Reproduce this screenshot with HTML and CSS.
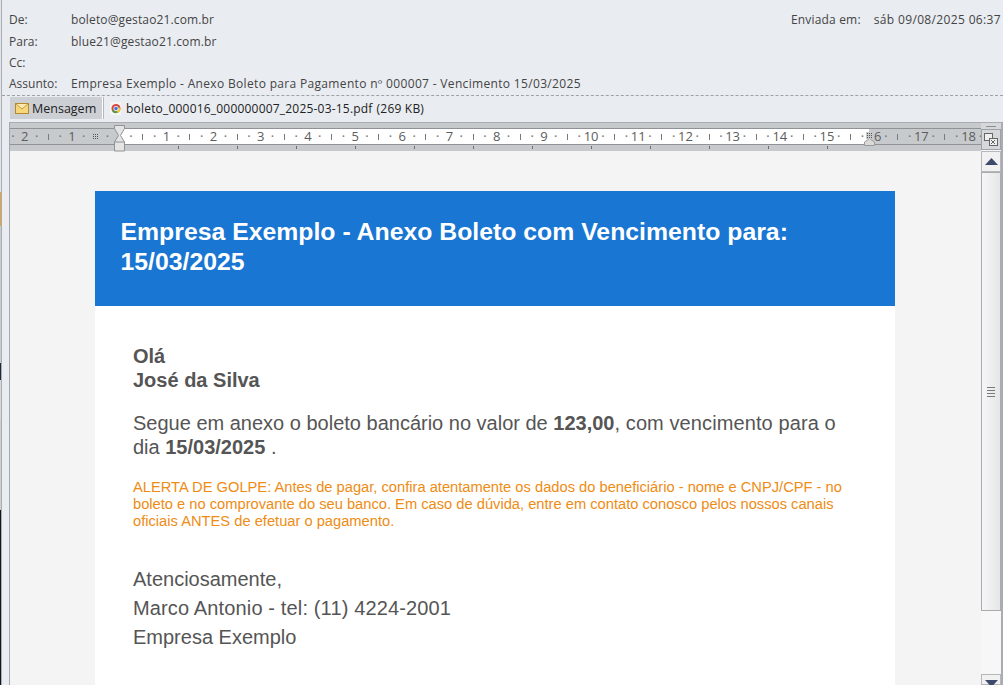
FILE: index.html
```html
<!DOCTYPE html>
<html lang="pt-BR">
<head>
<meta charset="utf-8">
<title>Boleto</title>
<link rel="stylesheet" href="styles.css">
</head>
<body>
<div class="window">
  <div class="sliver">
    <i class="seg seg-a"></i><i class="seg seg-b"></i><i class="seg seg-c"></i><i class="seg seg-d"></i><i class="seg seg-e"></i><i class="seg seg-f"></i><i class="seg seg-g"></i>
  </div>
  <div class="main">
    <header class="meta">
      <div class="row"><span class="label">De:</span><span class="value addr">boleto@gestao21.com.br</span><span class="sent"><span class="sent-label">Enviada em:</span><span class="sent-date">sáb 09/08/2025 06:37</span></span></div>
      <div class="row"><span class="label">Para:</span><span class="value addr">blue21@gestao21.com.br</span></div>
      <div class="row"><span class="label">Cc:</span><span class="value"></span></div>
      <div class="row"><span class="label">Assunto:</span><span class="value subject">Empresa Exemplo - Anexo Boleto para Pagamento nº 000007 - Vencimento 15/03/2025</span></div>
    </header>
    <nav class="tabs">
      <div class="tab active">
        <svg class="ic-mail" width="14" height="11" viewBox="0 0 14 11"><rect x=".5" y=".5" width="13" height="10" fill="#f6d77c" stroke="#b8892c"/><path d="M1 1l6 5 6-5" fill="#fbe9ad" stroke="#c79a3c"/></svg>
        <span>Mensagem</span>
      </div>
      <div class="tab">
        <svg class="ic-pdf" width="12" height="13" viewBox="0 0 12 13"><rect x="0" y="0" width="11" height="13" fill="#f5f5f2"/><circle cx="6" cy="6.500" r="4.500" fill="#d9463a"/><path d="M6 6.500L2 9a4.500 4.500 0 0 0 5.500 1.800z" fill="#4a9f4c"/><path d="M6 6.500l4.400-1a4.500 4.500 0 0 1-2.900 5.300z" fill="#f2c531"/><circle cx="6" cy="6.500" r="2.200" fill="#3f78d8" stroke="#fff" stroke-width=".8"/></svg>
        <span class="file">boleto_000016_000000007_2025-03-15.pdf</span><span class="size">(269 KB)</span>
      </div>
    </nav>
    <section class="editor">
      <div class="editor-left">
        <div class="ruler">
          <div class="ruler-top"></div>
          <div class="ruler-scale">
            <div class="ruler-track">
              <span class="cell"><b class="blank"></b><i>·</i><em>2</em><i>·</i></span>
              <span class="cell"><b></b><i>·</i><em>1</em><i>·</i></span>
              <span class="cell"><b class="blank"><u class="grid-mark"></u></b><i>·</i><em></em><i>·</i></span>
              <span class="cell"><b></b><i>·</i><em>1</em><i>·</i></span>
              <span class="cell"><b></b><i>·</i><em>2</em><i>·</i></span>
              <span class="cell"><b></b><i>·</i><em>3</em><i>·</i></span>
              <span class="cell"><b></b><i>·</i><em>4</em><i>·</i></span>
              <span class="cell"><b></b><i>·</i><em>5</em><i>·</i></span>
              <span class="cell"><b></b><i>·</i><em>6</em><i>·</i></span>
              <span class="cell"><b></b><i>·</i><em>7</em><i>·</i></span>
              <span class="cell"><b></b><i>·</i><em>8</em><i>·</i></span>
              <span class="cell"><b></b><i>·</i><em>9</em><i>·</i></span>
              <span class="cell"><b></b><i>·</i><em>10</em><i>·</i></span>
              <span class="cell"><b></b><i>·</i><em>11</em><i>·</i></span>
              <span class="cell"><b></b><i>·</i><em>12</em><i>·</i></span>
              <span class="cell"><b></b><i>·</i><em>13</em><i>·</i></span>
              <span class="cell"><b></b><i>·</i><em>14</em><i>·</i></span>
              <span class="cell"><b></b><i>·</i><em>15</em><i>·</i></span>
              <span class="cell"><b></b><i>·</i><em class="sixteen">6</em><i>·</i></span>
              <span class="cell"><b></b><i>·</i><em>17</em><i>·</i></span>
              <span class="cell"><b></b><i>·</i><em>18</em><i>·</i></span>
            </div>
          </div>
          <div class="ruler-bottom"><div class="tabstops"></div></div>
          <svg class="marker-left" width="12" height="27" viewBox="0 0 12 27"><path d="M.5.500h10v3L6.500 10.500 10.500 17v9H.5v-9L4.500 10.500.5 3.500z" fill="#e4e4e4" stroke="#8f9296"/><path d="M.5 17h10" stroke="#8f9296"/></svg>
          <svg class="marker-right" width="12" height="8" viewBox="0 0 12 8"><path d="M.5 7.500V4L5.500.5 10.500 4v3.500z" fill="#d9d9d9" stroke="#9a9a9a"/></svg>
          <u class="grid-mark hash"></u>
        </div>
        <div class="doc">
          <article class="mail">
            <h1 class="mail-title">Empresa Exemplo - Anexo Boleto com Vencimento para: 15/03/2025</h1>
            <div class="mail-body">
              <p class="greet"><strong>Olá<br>José da Silva</strong></p>
              <p class="lead">Segue em anexo o boleto bancário no valor de <strong>123,00</strong><span class="tail">, com vencimento para o</span> dia <strong>15/03/2025</strong> .</p>
              <p class="alert">ALERTA DE GOLPE: Antes de pagar, confira atentamente os dados do beneficiário - nome e CNPJ/CPF - no boleto e no comprovante do seu banco. Em caso de dúvida, entre em contato conosco pelos nossos canais oficiais ANTES de efetuar o pagamento.</p>
              <p class="sign">Atenciosamente,<br><span class="tel">Marco Antonio - tel: (11) 4224-2001</span><br>Empresa Exemplo</p>
            </div>
          </article>
        </div>
      </div>
      <aside class="side">
        <div class="side-dash"><i></i></div>
        <div class="sbtn view"><svg width="16" height="16" viewBox="0 0 16 16"><rect x="1.500" y="1.500" width="8" height="7" fill="#eee" stroke="#666"/><rect x="6.500" y="6.500" width="8" height="7" fill="#eee" stroke="#666"/><path d="M8 8l4 4M12 8l-4 4" stroke="#666"/></svg></div>
        <div class="sbtn arrow"><svg width="13" height="7" viewBox="0 0 13 7"><path d="M6.500 0L13 7H0z" fill="#3d4a6b"/></svg></div>
        <div class="thumb"><i></i><i></i><i></i><i></i></div>
        <div class="trough"></div>
        <div class="sbtn arrow down"><svg width="13" height="7" viewBox="0 0 13 7"><path d="M6.500 7L13 0H0z" fill="#3d4a6b"/></svg></div>
      </aside>
    </section>
  </div>
</div>
</body>
</html>
```
FILE: styles.css
```css
* { box-sizing: border-box; }
html, body { margin: 0; height: 100%; overflow: hidden; }
body { background: #e9ecf1; font-family: "Open Sans", "Noto Sans", sans-serif; font-size: 12px; color: #444; }

.window { display: flex; width: 1003px; height: 685px; }

.sliver { width: 2px; flex: none; display: flex; flex-direction: column; border-right: 1px solid #a9adb3; }
.seg { display: block; width: 1px; }
.seg-a { height: 192px; background: #e4e6ea; }
.seg-b { height: 34px; background: #e5a440; }
.seg-c { height: 137px; background: #c9cbce; }
.seg-d { height: 17px; background: #1c2a3c; }
.seg-e { height: 40px; background: #d8d8d6; }
.seg-f { height: 90px; background: #cfcfcc; }
.seg-g { height: 175px; background: #14161a; }

.main { flex: 1; min-width: 0; display: flex; flex-direction: column; }

.meta { height: 96px; padding: 9px 0 0 7px; border-bottom: 1px dashed #9ea2a8; }
.row { display: flex; height: 21.400px; align-items: center; white-space: nowrap; }
.label { width: 62px; flex: none; }
.value { flex: none; }
.addr { letter-spacing: .14px; }
.subject { letter-spacing: .33px; }
.sent { margin-left: auto; padding-right: 2px; display: flex; }
.sent-label { margin-right: 13px; letter-spacing: .18px; }
.sent-date { letter-spacing: .35px; }

.tabs { height: 26px; display: flex; align-items: flex-start; padding: 1px 0 0 8px; }
.tab { display: flex; align-items: center; height: 22px; white-space: nowrap; color: #222; }
.tab.active { width: 92px; padding-left: 5px; background: #ccd0d4; margin-right: 1px; box-shadow: 1px 0 0 #fff, 2px 0 0 #b3b6ba; font-size: 12.500px; }
.tab.active span { margin-left: 3px; }
.tab + .tab { padding-left: 7px; }
.ic-pdf { margin-right: 4px; }
.file { letter-spacing: .2px; }
.size { margin-left: 4px; letter-spacing: .2px; }

.editor { flex: 1; min-height: 0; display: flex; padding-left: 7px; }
.editor-left { flex: 1; min-width: 0; display: flex; flex-direction: column; border-left: 1px solid #a2a7b0; }

.ruler { position: relative; height: 29px; flex: none; background: #c7cacd; border-top: 1px solid #a9acb0; }
.ruler-top { height: 5px; }
.ruler-scale { height: 17px; overflow: hidden; border-top: 1px solid #8f9296; border-bottom: 1px solid #8f9296;
  background: linear-gradient(to right, #c7cacd 0 109px, #fff 109px 859px, #c7cacd 859px); }
.ruler-track { display: flex; margin-left: -14.700px; width: 1100px; }
.cell { flex: 0 0 47.200px; display: grid; grid-template-columns: repeat(4, 25%); height: 15px; line-height: 15px; text-align: center; color: #5c5c5c; font-size: 13px; }
.cell b { background: linear-gradient(#7a7a7a, #7a7a7a) center / 1px 6px no-repeat; display: flex; align-items: center; justify-content: center; }
.cell b.blank { background: none; }
.cell i { font-style: normal; font-size: 10px; font-weight: 700; color: #777; }
.cell em { font-style: normal; white-space: nowrap; display: flex; justify-content: center; }
.grid-mark { display: block; width: 7px; height: 7px; background: repeating-linear-gradient(to right, #c7cacd 0 1px, transparent 1px 2px), repeating-linear-gradient(to bottom, #c7cacd 0 1px, transparent 1px 2px), #555; }
.sixteen { padding-left: 7px; }
.ruler-bottom { height: 6px; padding: 1px 0 0 110px; }
.tabstops { width: 708px; height: 3px; background: repeating-linear-gradient(to right, transparent 0 58px, #6d6f72 58px 59px); }
.marker-left { position: absolute; left: 104px; top: 2px; }
.marker-right { position: absolute; left: 854px; top: 15px; }
.hash { position: absolute; left: 856px; top: 9px; }

.doc { flex: 1; min-height: 0; overflow: hidden; background: #f4f4f4; padding: 40px 0 0 85px; }
.mail { width: 800px; background: #fff; font-family: "Liberation Sans", Arial, sans-serif; color: #555; height: 600px; }
.mail-title { margin: 0; height: 115px; padding: 26px 90px 0 25.500px; background: #1976d2; color: #fff; font-size: 24.800px; line-height: 30px; font-weight: 700; }
.mail-body { padding: 38px 38px 0; }
.mail-body p { margin: 0; }
.greet { font-size: 20px; line-height: 24px; }
.lead { font-size: 20px; line-height: 24px; margin-top: 19px !important; }
.tail { letter-spacing: .1px; }
.alert { font-size: 14.700px; line-height: 17px; color: #ee8c14; margin-top: 20px !important; }
.sign { font-size: 20px; line-height: 29px; margin-top: 35px !important; }
.tel { letter-spacing: .14px; }

.side { width: 22px; flex: none; display: flex; flex-direction: column; align-items: flex-start; border-right: 2px solid #a9adb3; background: #f7f7f8; }
.side-dash { width: 20px; height: 7px; background: #d5d7da; display: flex; justify-content: center; align-items: center; border-top: 1px solid #a9acb0; }
.side-dash i { width: 10px; height: 1px; background: #8b8d90; }
.sbtn { width: 20px; height: 21px; display: flex; align-items: center; justify-content: center; border: 1px solid #b4b7bb; background: #eef0f2; }
.view { background: #d5d7da; border-color: #9ea1a5; }
.arrow { background: #f1f1f2; margin-top: 1px; }
.thumb { width: 20px; height: 439px; border: 1px solid #a9abae; background: linear-gradient(to right, #f6f6f7, #e6e6e8); display: flex; flex-direction: column; align-items: center; justify-content: center; gap: 2px; }
.thumb i { display: block; width: 8px; height: 1px; background: #77797c; }
.trough { width: 20px; flex: 1; }
.down { margin: 0; height: 11px; align-items: flex-start; padding-top: 5px; }
```
